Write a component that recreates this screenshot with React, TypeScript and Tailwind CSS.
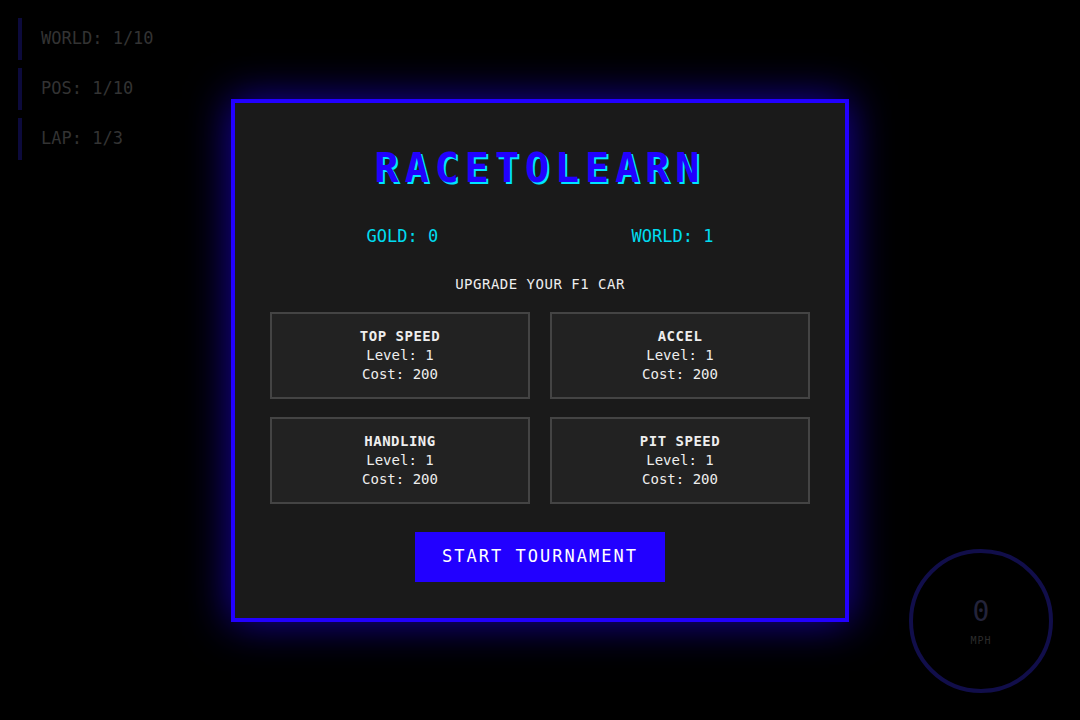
const mono = { fontFamily: '"DejaVu Sans Mono", "Liberation Mono", monospace' }

const upgrades = [
  { name: 'TOP SPEED', level: 1, cost: 200 },
  { name: 'ACCEL', level: 1, cost: 200 },
  { name: 'HANDLING', level: 1, cost: 200 },
  { name: 'PIT SPEED', level: 1, cost: 200 },
]

const hud = ['WORLD: 1/10', 'POS: 1/10', 'LAP: 1/3']

function UpgradeCard({ name, level, cost }: { name: string; level: number; cost: number }) {
  return (
    <div className="flex flex-col items-center border-2 border-[#444] bg-[#222] py-[13px] text-[14px] leading-[19px] text-[#eee]">
      <span className="font-bold tracking-[0.5px]">{name}</span>
      <span>Level: {level}</span>
      <span>Cost: {cost}</span>
    </div>
  )
}

export default function App() {
  return (
    <div className="relative h-[720px] w-[1080px] overflow-hidden bg-black" style={mono}>
      {/* race hud, dimmed behind the menu */}
      <div className="absolute left-[18px] top-[18px] flex flex-col gap-2">
        {hud.map((row) => (
          <div key={row} className="flex h-[42px] items-center border-l-4 border-[#0c0a3c] pl-[19px] text-[17px] text-[#333]">
            {row}
          </div>
        ))}
      </div>

      <div className="absolute bottom-[27px] right-[27px] flex h-[144px] w-[144px] flex-col items-center justify-center rounded-full border-4 border-[#110e4a]">
        <span className="mt-[2px] text-[28px] leading-none text-[#23233a]">0</span>
        <span className="mt-[10px] text-[10px] leading-none tracking-[1px] text-[#2c2c2c]">MPH</span>
      </div>

      <div className="flex h-full items-center justify-center">
        <div className="relative flex w-[618px] flex-col items-center border-4 border-[#2200ff] bg-[#1a1a1a] px-[35px] pb-[36px] pt-[40px] shadow-[0_0_40px_rgba(34,0,255,0.65)]">
          <h1
            className="text-[40px] font-bold leading-[50px] tracking-[6px] text-[#2200ff]"
            style={{ textShadow: '2px 2px 0 #00e5ff' }}
          >
            RACETOLEARN
          </h1>

          <div className="mt-[31px] flex w-full justify-around text-[17px] leading-[24px] text-[#00dcf0]">
            <span>GOLD: 0</span>
            <span>WORLD: 1</span>
          </div>

          <p className="mt-[26px] text-[14px] leading-[20px] tracking-[0.5px] text-[#eee]">UPGRADE YOUR F1 CAR</p>

          <div className="mt-[18px] grid w-full grid-cols-2 gap-x-5 gap-y-[18px]">
            {upgrades.map((u) => (
              <UpgradeCard key={u.name} {...u} />
            ))}
          </div>

          <button className="mt-[28px] h-[50px] bg-[#2200ff] px-[27px] text-[17px] tracking-[2px] text-white">
            START TOURNAMENT
          </button>
        </div>
      </div>
    </div>
  )
}
